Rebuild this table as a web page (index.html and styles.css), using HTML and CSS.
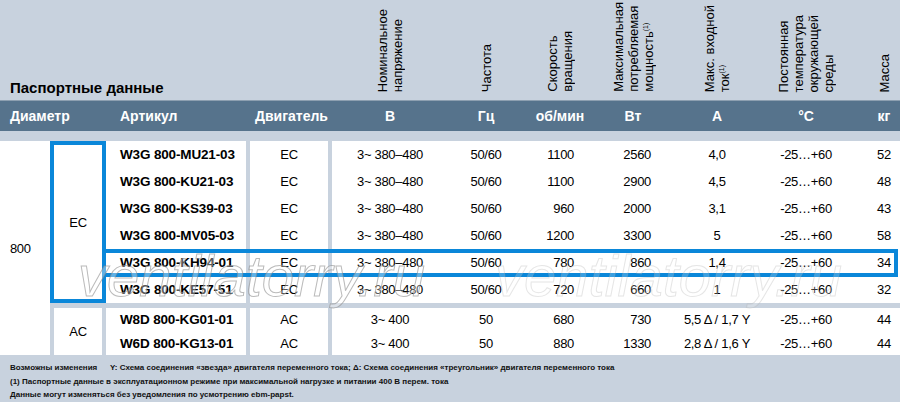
FILE: index.html
```html
<!DOCTYPE html>
<html lang="ru">
<head>
<meta charset="utf-8">
<title>Паспортные данные</title>
<link rel="stylesheet" href="styles.css">
</head>
<body>
<div class="sheet">
  <div class="top">
    <div class="title-cell"><h1 class="title">Паспортные данные</h1></div>
    <div class="rot c5"><span>Номинальное<br>напряжение</span></div>
    <div class="rot c6"><span>Частота</span></div>
    <div class="rot c7"><span>Скорость<br>вращения</span></div>
    <div class="rot c8"><span>Максимальная<br>потребляемая<br>мощность<sup>(1)</sup></span></div>
    <div class="rot c9"><span>Макс. входной<br>ток<sup>(1)</sup></span></div>
    <div class="rot c10"><span>Постоянная<br>температура<br>окружающей<br>среды</span></div>
    <div class="rot c11"><span>Масса</span></div>
  </div>

  <div class="band">
    <div class="bh-diam">Диаметр</div>
    <div class="bh-art">Артикул</div>
    <div class="bh-mot">Двигатель</div>
    <div class="bh c5">В</div>
    <div class="bh c6">Гц</div>
    <div class="bh c7">об/мин</div>
    <div class="bh c8">Вт</div>
    <div class="bh c9">A</div>
    <div class="bh c10">°C</div>
    <div class="bh c11">кг</div>
  </div>
  <div class="strip"></div>

  <div class="body">
    <div class="diam">800</div>
    <div class="groups">
      <div class="group">
        <div class="type type-ec">EC</div>
        <div class="rows rows-ec">
          <div class="row"><div class="art">W3G 800-MU21-03</div><div class="mot">EC</div><div class="v c5">3~ 380–480</div><div class="v c6">50/60</div><div class="v c7 r7">1100</div><div class="v c8 r8">2560</div><div class="v c9">4,0</div><div class="v c10">-25…+60</div><div class="v c11">52</div></div>
          <div class="row"><div class="art">W3G 800-KU21-03</div><div class="mot">EC</div><div class="v c5">3~ 380–480</div><div class="v c6">50/60</div><div class="v c7 r7">1100</div><div class="v c8 r8">2900</div><div class="v c9">4,5</div><div class="v c10">-25…+60</div><div class="v c11">48</div></div>
          <div class="row"><div class="art">W3G 800-KS39-03</div><div class="mot">EC</div><div class="v c5">3~ 380–480</div><div class="v c6">50/60</div><div class="v c7 r7">960</div><div class="v c8 r8">2000</div><div class="v c9">3,1</div><div class="v c10">-25…+60</div><div class="v c11">43</div></div>
          <div class="row"><div class="art">W3G 800-MV05-03</div><div class="mot">EC</div><div class="v c5">3~ 380–480</div><div class="v c6">50/60</div><div class="v c7 r7">1200</div><div class="v c8 r8">3300</div><div class="v c9">5</div><div class="v c10">-25…+60</div><div class="v c11">58</div></div>
          <div class="row row-hl"><div class="art">W3G 800-KH94-01</div><div class="mot">EC</div><div class="v c5">3~ 380–480</div><div class="v c6">50/60</div><div class="v c7 r7">780</div><div class="v c8 r8">860</div><div class="v c9">1,4</div><div class="v c10">-25…+60</div><div class="v c11">34</div></div>
          <div class="row"><div class="art">W3G 800-KE57-51</div><div class="mot">EC</div><div class="v c5">3~ 380–480</div><div class="v c6">50/60</div><div class="v c7 r7">720</div><div class="v c8 r8">660</div><div class="v c9">1</div><div class="v c10">-25…+60</div><div class="v c11">32</div></div>
        </div>
      </div>
      <div class="group">
        <div class="type type-ac">AC</div>
        <div class="rows rows-ac">
          <div class="row"><div class="art">W8D 800-KG01-01</div><div class="mot">AC</div><div class="v c5">3~ 400</div><div class="v c6">50</div><div class="v c7 r7">680</div><div class="v c8 r8">730</div><div class="v c9">5,5 Δ / 1,7 Y</div><div class="v c10">-25…+60</div><div class="v c11">44</div></div>
          <div class="row"><div class="art">W6D 800-KG13-01</div><div class="mot">AC</div><div class="v c5">3~ 400</div><div class="v c6">50</div><div class="v c7 r7">880</div><div class="v c8 r8">1330</div><div class="v c9">2,8 Δ / 1,6 Y</div><div class="v c10">-25…+60</div><div class="v c11">44</div></div>
        </div>
      </div>
    </div>
    <div class="wm wm-left">ventilatorry.ru</div>
    <div class="wm wm-right">ventilatorry.ru</div>
  </div>

  <div class="foot">
    <div class="foot-line"><span class="foot-lead">Возможны изменения</span><span>Y: Схема соединения «звезда» двигателя переменного тока; Δ: Схема соединения «треугольник» двигателя переменного тока</span></div>
    <div class="foot-line">(1) Паспортные данные в эксплуатационном режиме при максимальной нагрузке и питании 400 В перем. тока</div>
    <div class="foot-line">Данные могут изменяться без уведомления по усмотрению ebm-papst.</div>
  </div>
</div>
</body>
</html>
```
FILE: styles.css
```css
* { box-sizing: border-box; }
html, body { margin: 0; padding: 0; }
body {
  background: #c8d2de;
  font-family: "Liberation Sans", Arial, sans-serif;
  color: #000;
}
.sheet { width: 900px; height: 402px; overflow: hidden; }

/* column widths shared by header rows */
.c5 { width: 116px; }
.c6 { width: 76px; }
.c7 { width: 72px; }
.c8 { width: 74px; }
.c9 { width: 94px; }
.c10 { width: 84px; }
.c11 { width: 52px; padding-left: 20px; }

/* top header with rotated captions */
.top { display: flex; height: 100px; }
.title-cell { width: 332px; display: flex; align-items: flex-end; padding: 0 0 4px 10px; }
.title { margin: 0; font-size: 15px; font-weight: bold; line-height: 17px; }
.rot { display: flex; justify-content: center; align-items: flex-end; padding-bottom: 8px; }
.rot span {
  writing-mode: vertical-rl;
  transform: rotate(180deg);
  font-size: 13px;
  line-height: 15px;
  white-space: nowrap;
}
.rot sup { font-size: 7px; vertical-align: 3px; line-height: 0; }

/* dark band with units */
.band {
  display: flex;
  height: 31px;
  align-items: center;
  background: #56738c;
  border-top: 1px solid #8d9fb0;
  color: #fff;
  font-weight: bold;
  font-size: 14px;
}
.bh-diam { width: 106px; padding-left: 10px; }
.bh-art { width: 144px; padding-left: 14px; }
.bh-mot { width: 82px; padding-left: 5px; }
.bh { text-align: center; }
.strip { height: 10px; }

/* table body */
.body { display: flex; height: 214px; position: relative; background: #fff; }
.diam {
  width: 50px;
  display: flex;
  align-items: center;
  padding-left: 10px;
  font-size: 13px;
  letter-spacing: -0.4px;
}
.groups { flex: 1; display: flex; flex-direction: column; gap: 5px; background: #c8d2de; }
.group { display: flex; }
.type {
  width: 56px;
  background: #fff;
  display: flex;
  align-items: center;
  justify-content: center;
  font-size: 13px;
  letter-spacing: -0.3px;
}
.type-ec { border: 4px solid #0a87d9; }
.type-ac { border-left: 4px solid #c8d2de; border-right: 4px solid #c8d2de; }
.rows { flex: 1; display: flex; flex-direction: column; }
.rows-ec .row { height: 27px; }
.rows-ac .row { height: 23.5px; }
.row {
  display: flex;
  align-items: stretch;
  background: #fff;
  font-size: 13px;
  letter-spacing: -0.3px;
  white-space: nowrap;
}
.row > div { display: flex; align-items: center; justify-content: center; }
.row .art {
  width: 144px;
  justify-content: flex-start;
  padding-left: 14px;
  border-right: 4px solid #c8d2de;
  font-weight: bold;
  font-size: 13.5px;
  letter-spacing: -0.15px;
}
.row .mot { width: 82px; border-right: 4px solid #c8d2de; }
.row .r7 { justify-content: flex-end; padding-right: 22px; }
.row .r8 { justify-content: flex-end; padding-right: 19px; }
.row .c11 { padding-left: 20px; }
.row-hl { position: relative; }
.row-hl::after {
  content: "";
  position: absolute;
  top: 0; bottom: -1px; left: -4px; right: 2px;
  border: 4px solid #0a87d9;
  pointer-events: none;
}

/* watermark */
.wm {
  position: absolute;
  top: 105px;
  font-size: 58px;
  font-style: italic;
  line-height: 60px;
  color: rgba(255,255,255,0.35);
  -webkit-text-stroke: 1px rgba(140,140,140,0.6);
  white-space: nowrap;
  pointer-events: none;
}
.wm-left { left: 78px; }
.wm-right { left: 495px; -webkit-text-stroke: 1px rgba(170,170,170,0.3); color: rgba(255,255,255,0.2); }

/* footer */
.foot {
  padding: 6px 10px 0;
  font-size: 8px;
  font-weight: bold;
  line-height: 13.5px;
  color: #111;
}
.foot-line { display: flex; white-space: nowrap; }
.foot-lead { width: 100px; flex: none; }
```
